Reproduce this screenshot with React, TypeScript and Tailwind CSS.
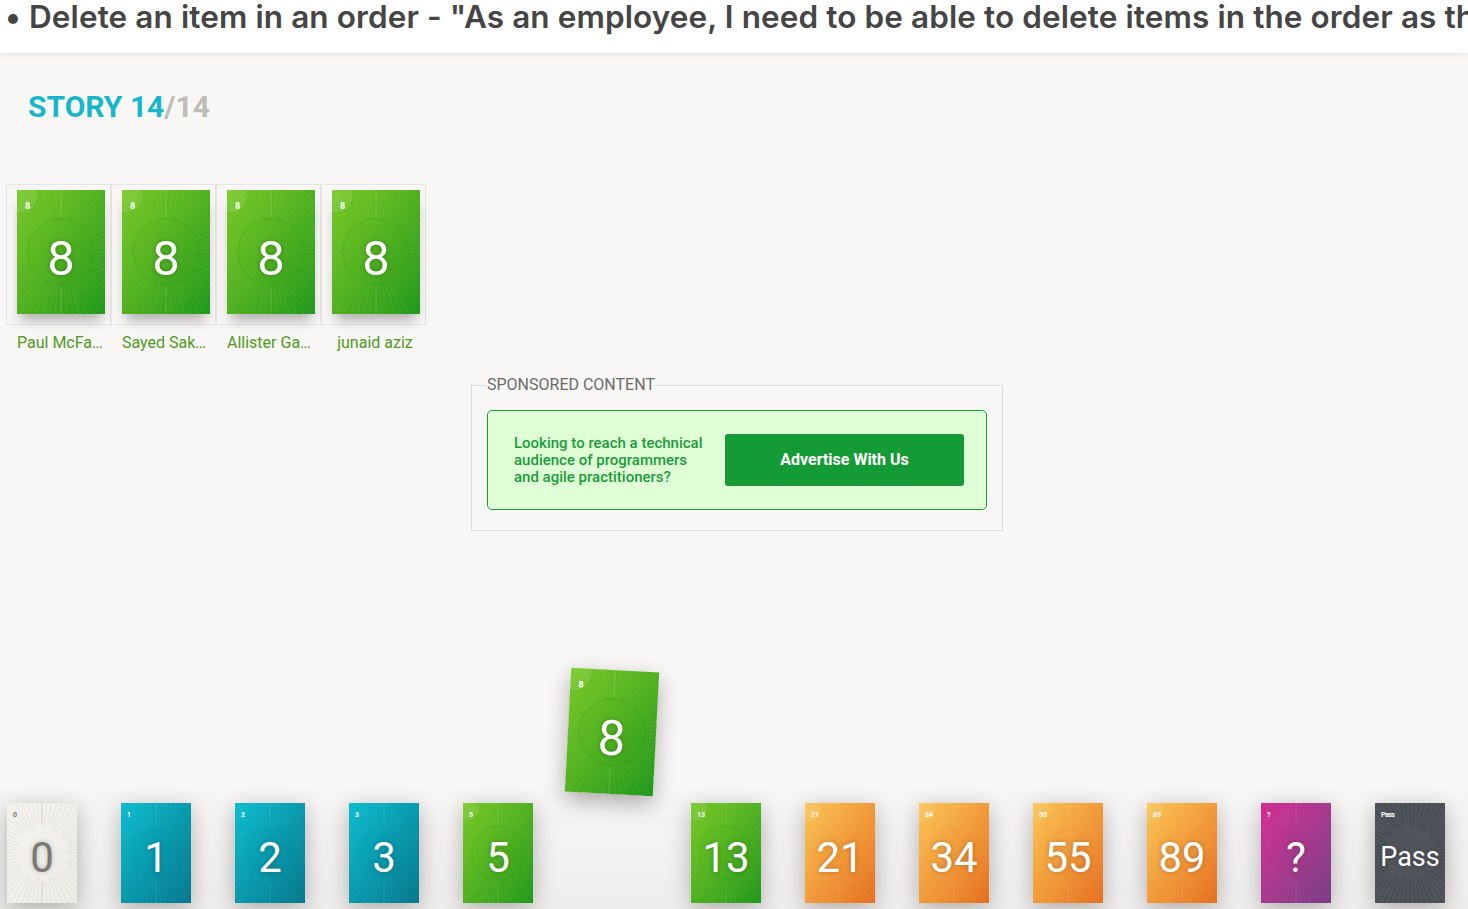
import React from "react";

type Kind = "zero" | "teal" | "green" | "orange" | "magenta" | "dark";

const bgClass: Record<Kind, string> = {
  zero: "bg-linear-to-br from-[#f5f3ee] to-[#eeece6]",
  teal: "bg-linear-to-br from-[#0cbccf] to-[#06788c]",
  green: "bg-linear-to-br from-[#77c925] to-[#1c991c]",
  orange: "bg-linear-to-br from-[#fac452] to-[#e56f20]",
  magenta: "bg-linear-to-br from-[#d42a92] to-[#793c87]",
  dark: "bg-[#50555c]",
};

const rayColor: Record<Kind, string> = {
  zero: "#c9c6c0",
  teal: "#ffffff",
  green: "#ffffff",
  orange: "#ffffff",
  magenta: "#ffffff",
  dark: "#2a2d31",
};

function Rays({ kind }: { kind: Kind }) {
  const lines = [];
  const n = 64;
  for (let i = 0; i < n; i++) {
    const a = (i / n) * Math.PI * 2;
    const r1 = 30 + ((i * 7) % 9);
    const r2 = 80;
    lines.push(
      <line
        key={i}
        x1={44 + Math.cos(a) * r1}
        y1={62 + Math.sin(a) * r1}
        x2={44 + Math.cos(a) * r2}
        y2={62 + Math.sin(a) * r2}
        stroke={rayColor[kind]}
        strokeWidth={0.5}
        strokeOpacity={kind === "zero" || kind === "dark" ? 0.8 : 0.13}
      />
    );
  }
  const ring = kind === "green";
  const corner = kind === "green" || kind === "orange";
  return (
    <svg
      viewBox="0 0 88 124"
      preserveAspectRatio="none"
      className="absolute inset-0 h-full w-full"
    >
      {lines}
      <line x1="44" y1="0" x2="44" y2="26" stroke={rayColor[kind]} strokeOpacity={kind === "zero" ? 0.8 : 0.15} strokeWidth="0.8" />
      <line x1="44" y1="98" x2="44" y2="124" stroke={rayColor[kind]} strokeOpacity={kind === "zero" ? 0.8 : 0.15} strokeWidth="0.8" />
      {ring && (
        <circle cx="44" cy="62" r="33" fill="none" stroke="#1f8f17" strokeOpacity="0.35" strokeWidth="0.7" />
      )}
      {corner && (
        <circle cx="4" cy="6" r="17" fill="#ffffff" fillOpacity="0.08" stroke="#1f8f17" strokeOpacity={ring ? 0.3 : 0} strokeWidth="0.6" />
      )}
    </svg>
  );
}

function Card({
  value,
  kind,
  size,
}: {
  value: string;
  kind: Kind;
  size: "lg" | "sm";
}) {
  const text = kind === "zero" ? "text-[#7a7874]" : "text-white";
  const big = size === "lg";
  const isPass = value === "Pass";
  return (
    <div
      className={`relative overflow-hidden ${bgClass[kind]} ${
        big ? "h-[124px] w-[88px]" : "h-[100px] w-[70px]"
      }`}
    >
      <Rays kind={kind} />
      <span
        className={`absolute font-bold leading-none ${text} ${
          big ? "left-[8px] top-[12px] text-[9px]" : "left-[6px] top-[9px] text-[7px]"
        } ${isPass ? "tracking-[-0.5px]" : ""}`}
      >
        {value}
      </span>
      <div
        className={`absolute inset-0 flex items-center justify-center leading-none ${text} [text-shadow:0_0_5px_rgba(0,0,0,0.25)] ${
          big
            ? "pt-[12px] text-[49px]"
            : isPass
            ? "pt-[8px] text-[27px]"
            : "pt-[9px] text-[42px]"
        }`}
      >
        {value}
      </div>
    </div>
  );
}

const players = [
  { name: "Paul McFarland" },
  { name: "Sayed Sakhi" },
  { name: "Allister Gallagher" },
  { name: "junaid aziz" },
];

const hand: { v: string; k: Kind }[] = [
  { v: "0", k: "zero" },
  { v: "1", k: "teal" },
  { v: "2", k: "teal" },
  { v: "3", k: "teal" },
  { v: "5", k: "green" },
  { v: "8", k: "green" },
  { v: "13", k: "green" },
  { v: "21", k: "orange" },
  { v: "34", k: "orange" },
  { v: "55", k: "orange" },
  { v: "89", k: "orange" },
  { v: "?", k: "magenta" },
  { v: "Pass", k: "dark" },
];

export default function App(): React.ReactElement {
  return (
    <div className="flex h-[909px] flex-col overflow-hidden bg-[#f8f7f5] font-['Roboto',sans-serif]">
      <header className="relative z-10 h-[53px] shrink-0 overflow-hidden bg-white pl-[5px] shadow-[0_2px_6px_rgba(0,0,0,0.07)]">
        <h1 className="whitespace-nowrap font-['Inter',sans-serif] text-[31.5px] font-semibold leading-[34px] tracking-[0.1px] text-[#454545]">
          • Delete an item in an order - "As an employee, I need to be able to
          delete items in the order as they request."
        </h1>
      </header>

      <div className="pl-[28px] pt-[36px]">
        <h2 className="text-[30px] font-bold leading-[36px] text-[#17b7cb]">
          STORY 14<span className="text-[#bfbcb7]">/14</span>
        </h2>
      </div>

      <div className="mt-[59px] flex pl-[6px]">
        {players.map((p) => (
          <div key={p.name} className="flex w-[105px] flex-col">
            <div className="flex h-[141px] w-[105px] border border-[#e6e4e1] pl-[10px] pt-[5px]">
              <div className="h-[124px] shadow-[0_10px_12px_-4px_rgba(0,0,0,0.3)]">
                <Card value="8" kind="green" size="lg" />
              </div>
            </div>
            <div className="ml-[11px] mt-[8px] w-[86px] truncate text-center text-[16px] leading-[20px] text-[#4f9a1f]">
              {p.name}
            </div>
          </div>
        ))}
      </div>

      <fieldset className="ml-[471px] mt-[23px] w-[532px] border border-[#dedcd9] px-[15px] pb-[20px] pt-[16px]">
        <legend className="text-[16px] leading-[18px] text-[#6b6b6b]">
          SPONSORED CONTENT
        </legend>
        <div className="flex h-[100px] items-center rounded-[5px] border border-[#1c9c37] bg-[#dfffd7] pl-[26px] pr-[22px]">
          <p className="w-[196px] text-[15px] font-medium leading-[17px] text-[#1d9b3b]">
            Looking to reach a technical audience of programmers and agile
            practitioners?
          </p>
          <button className="ml-auto h-[52px] w-[239px] rounded-[3px] bg-[#159b36] text-[16px] font-bold text-white">
            Advertise With Us
          </button>
        </div>
      </fieldset>

      <div className="mt-auto bg-linear-to-b from-[#f7f6f4] to-[#efeeec] pb-[6px] pl-[7px] pt-[14px]">
        <div className="flex gap-[44px]">
          {hand.map((c) =>
            c.v === "8" ? (
              <div key={c.v} className="relative h-[100px] w-[70px] shrink-0">
                <div className="absolute left-[-9px] top-[-133px] rotate-3 shadow-[0_8px_22px_rgba(0,0,0,0.3)]">
                  <Card value="8" kind="green" size="lg" />
                </div>
              </div>
            ) : (
              <div
                key={c.v}
                className="h-[100px] w-[70px] shrink-0 shadow-[0_6px_22px_rgba(0,0,0,0.28)]"
              >
                <Card value={c.v} kind={c.k} size="sm" />
              </div>
            )
          )}
        </div>
      </div>
    </div>
  );
}
